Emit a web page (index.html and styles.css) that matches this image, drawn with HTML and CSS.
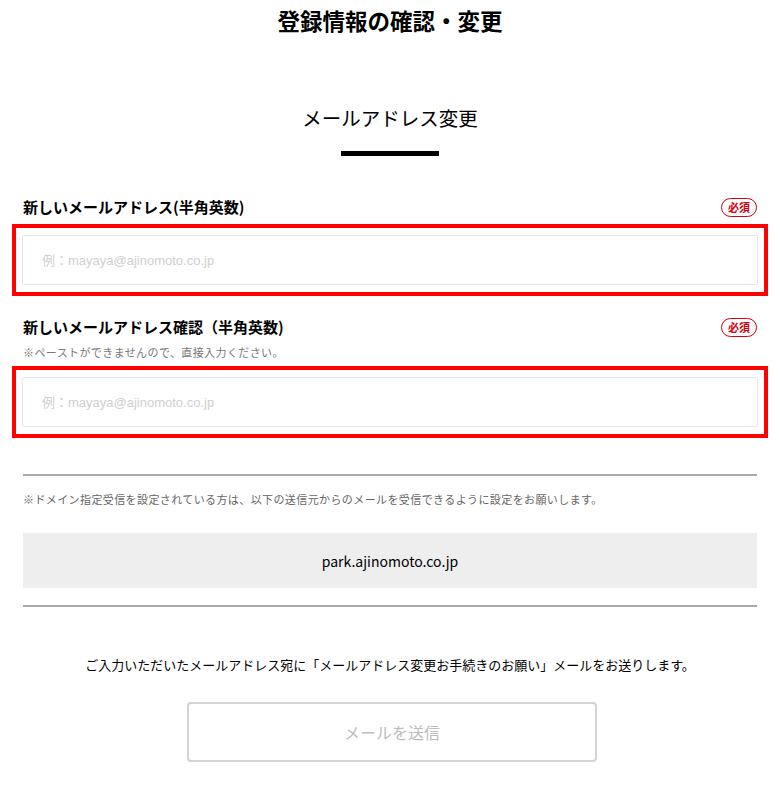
FILE: index.html
```html
<!DOCTYPE html>
<html lang="ja">
<head>
    <meta charset="UTF-8">
    <meta name="viewport" content="width=device-width, initial-scale=1.0">
    <title>登録情報の確認・変更</title>
    <link rel="stylesheet" href="styles.css">
</head>
<body>
    <div class="page">
        <h1 class="page-title">登録情報の確認・変更</h1>

        <h2 class="section-title">メールアドレス変更</h2>
        <div class="section-bar"></div>

        <div class="field first">
            <div class="field-head">
                <label class="field-label" for="mail1">新しいメールアドレス(半角英数)</label>
                <span class="badge">必須</span>
            </div>
            <div class="field-box">
                <input id="mail1" class="text-input" type="email" placeholder="例：mayaya@ajinomoto.co.jp">
            </div>
        </div>

        <div class="field second">
            <div class="field-head">
                <label class="field-label" for="mail2">新しいメールアドレス確認（半角英数)</label>
                <span class="badge">必須</span>
            </div>
            <p class="field-note">※ペーストができませんので、直接入力ください。</p>
            <div class="field-box">
                <input id="mail2" class="text-input" type="email" placeholder="例：mayaya@ajinomoto.co.jp">
            </div>
        </div>

        <hr class="divider top">
        <p class="domain-note">※ドメイン指定受信を設定されている方は、以下の送信元からのメールを受信できるように設定をお願いします。</p>
        <div class="domain-box">park.ajinomoto.co.jp</div>
        <hr class="divider bottom">

        <p class="send-text">ご入力いただいたメールアドレス宛に「メールアドレス変更お手続きのお願い」メールをお送りします。</p>
        <div class="send-row">
            <button class="send-button" type="button" disabled>メールを送信</button>
        </div>
    </div>
</body>
</html>
```

FILE: styles.css
```css
body {
    margin: 0;
    padding: 0;
    background: #fff;
    color: #000;
    font-family: "Noto Sans CJK JP", "Noto Sans", sans-serif;
}

.page {
    width: 734px;
    margin: 0 auto;
    padding-bottom: 30px;
}

.page-title {
    margin: 0;
    font-size: 22.5px;
    line-height: 40px;
    font-weight: bold;
    text-align: center;
}

.section-title {
    margin: 63px 0 0;
    font-size: 19.5px;
    line-height: 30px;
    font-weight: normal;
    text-align: center;
}

.section-bar {
    width: 98px;
    height: 5px;
    margin: 18px auto 0;
    background: #000;
}

/* 入力欄 */
.field.first {
    margin-top: 41px;
}

.field.second {
    margin-top: 21px;
}

.field-head {
    display: flex;
    justify-content: space-between;
    align-items: center;
    height: 20px;
}

.field-label {
    font-size: 15px;
    line-height: 20px;
    font-weight: bold;
}

.badge {
    display: flex;
    align-items: center;
    justify-content: center;
    box-sizing: border-box;
    width: 36px;
    height: 19px;
    border: 1.5px solid #d7000f;
    border-radius: 10px;
    color: #d7000f;
    font-size: 11px;
    font-weight: bold;
    line-height: 1;
}

.field-note {
    margin: 7px 0 0;
    font-size: 11px;
    line-height: 16px;
    letter-spacing: 0.4px;
    color: #777;
}

.field-box {
    margin: 7px -11px 0;
    padding: 7px 6px;
    border: 4px solid #f00;
}

.field.second .field-box {
    margin-top: 6px;
}

.text-input {
    display: block;
    box-sizing: border-box;
    width: 100%;
    height: 50px;
    padding: 0 19px;
    border: 1px solid #e6e6e6;
    border-radius: 2px;
    font-family: "Liberation Sans", "Noto Sans CJK JP", sans-serif;
    font-size: 13px;
    color: #333;
    background: #fff;
}

.text-input::placeholder {
    color: #cfcfcf;
}

/* ドメイン */
.divider {
    margin: 0;
    height: 2px;
    border: none;
    background: #aaa;
}

.divider.top {
    margin-top: 36px;
}

.domain-note {
    margin: 15px 0 0;
    font-size: 11px;
    line-height: 16px;
    letter-spacing: 0.4px;
    color: #666;
}

.domain-box {
    margin-top: 26px;
    height: 55px;
    display: flex;
    align-items: center;
    justify-content: center;
    background: #eee;
    font-size: 14px;
}

.divider.bottom {
    margin-top: 17px;
}

/* 送信 */
.send-text {
    margin: 48px 0 0;
    font-size: 13px;
    line-height: 20px;
    text-align: center;
}

.send-row {
    display: flex;
    justify-content: center;
    margin-top: 27px;
    padding-left: 4px;
}

.send-button {
    width: 410px;
    height: 60px;
    border: 2px solid #d4d4d4;
    border-radius: 4px;
    background: #fff;
    color: #bdbdbd;
    font-family: "Noto Sans CJK JP", sans-serif;
    font-size: 16px;
}
```
